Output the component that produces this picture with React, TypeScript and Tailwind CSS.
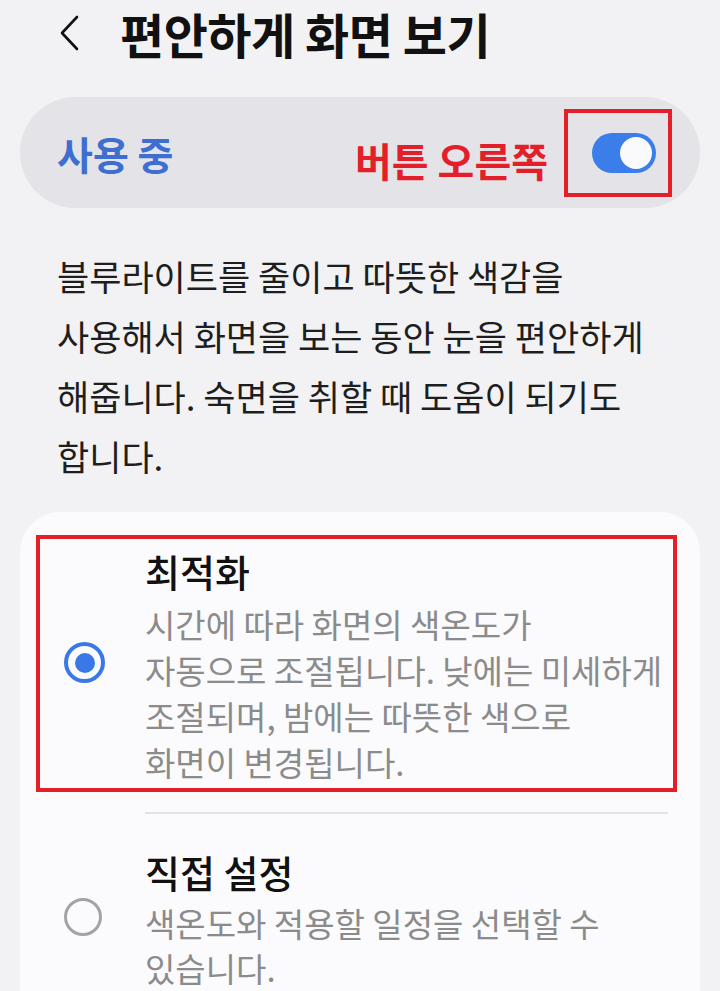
import React from "react";

const font = { fontFamily: '"Noto Sans CJK KR", "Noto Sans", sans-serif' };

export default function App() {
  return (
    <div
      className="w-[720px] h-[991px] overflow-hidden bg-[#f2f2f4] flex flex-col"
      style={font}
    >
      {/* Header */}
      <div className="flex items-center h-[66px]">
        <svg
          className="ml-[58px]"
          width="22"
          height="36"
          viewBox="0 0 22 36"
          fill="none"
        >
          <path
            d="M19 2 L4 18 L19 34"
            stroke="#111"
            strokeWidth="2.6"
            strokeLinecap="round"
            strokeLinejoin="round"
          />
        </svg>
        <h1 className="ml-[40px] text-[48px] leading-[60px] font-bold text-[#111] tracking-[-0.5px]">
          편안하게 화면 보기
        </h1>
      </div>

      {/* Pill */}
      <div className="mx-[20px] mt-[31px] h-[111px] rounded-full bg-[#e4e4e8] flex items-center pl-[37px] pr-[28px]">
        <span className="text-[39px] font-bold text-[#3e6fd0] leading-[50px]">
          사용 중
        </span>
        <span className="ml-auto mt-[14px] text-[40px] font-bold text-[#e3202a] leading-[50px]">
          버튼 오른쪽
        </span>
        <div className="ml-[16px] w-[108px] h-[88px] border-[4px] border-[#e3202a] flex items-center pl-[24px]">
          <div className="w-[64px] h-[40px] rounded-full bg-[#3b7de9] flex items-center justify-end pr-[4px]">
            <div className="w-[32px] h-[32px] rounded-full bg-[#fafafc]" />
          </div>
        </div>
      </div>

      {/* Description */}
      <p className="mt-[38px] px-[57px] text-[35px] leading-[60px] text-[#1e1e1e]">
        블루라이트를 줄이고 따뜻한 색감을
        <br />
        사용해서 화면을 보는 동안 눈을 편안하게
        <br />
        해줍니다. 숙면을 취할 때 도움이 되기도
        <br />
        합니다.
      </p>

      {/* Card */}
      <div className="mt-[26px] mx-[20px] flex-1 rounded-t-[40px] bg-[#fbfbfd] pt-[23px]">
        <div className="ml-[16px] w-[641px] h-[257px] border-[4px] border-[#e3202a] flex items-start pl-[24px] pt-[10px]">
          <div className="mt-[93px] w-[41px] h-[41px] rounded-full border-[4px] border-[#3b78e7] flex items-center justify-center shrink-0">
            <div className="w-[20px] h-[20px] rounded-full bg-[#3b78e7]" />
          </div>
          <div className="ml-[40px] flex flex-col">
            <div className="text-[38px] leading-[44px] font-medium text-[#111]">
              최적화
            </div>
            <div className="mt-[8px] text-[33px] leading-[46px] text-[#8b8b8b]">
              시간에 따라 화면의 색온도가
              <br />
              자동으로 조절됩니다. 낮에는 미세하게
              <br />
              조절되며, 밤에는 따뜻한 색으로
              <br />
              화면이 변경됩니다.
            </div>
          </div>
        </div>

        <div className="mt-[20px] ml-[125px] mr-[32px] h-[2px] bg-[#e3e3e6]" />

        <div className="flex items-start pl-[44px] pt-[36px]">
          <div className="mt-[48px] w-[38px] h-[38px] rounded-full border-[3px] border-[#a3a3a6] shrink-0" />
          <div className="ml-[43px] flex flex-col">
            <div className="text-[38px] leading-[44px] font-medium text-[#111]">
              직접 설정
            </div>
            <div className="mt-[7px] text-[33px] leading-[45px] text-[#8b8b8b]">
              색온도와 적용할 일정을 선택할 수
              <br />
              있습니다.
            </div>
          </div>
        </div>
      </div>
    </div>
  );
}
